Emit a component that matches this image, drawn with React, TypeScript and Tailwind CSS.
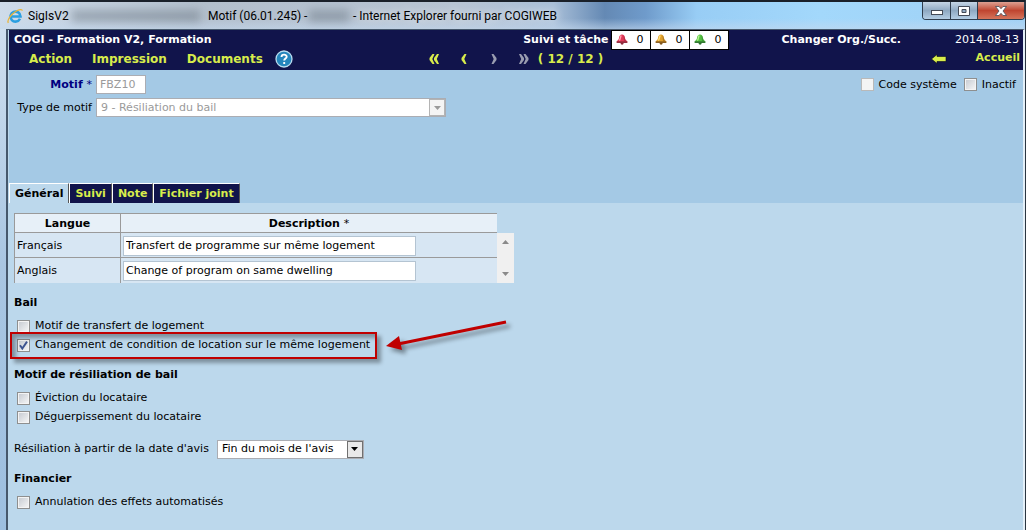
import { useState, type ReactNode } from "react";
import { clsx } from "clsx";

const cellCls = "border-t border-l border-[#9a9a9a] bg-[#d7e6f3] pt-px pl-[2px]";
const fieldCls = "h-5 border border-[#b4c4d2] bg-white text-[11px] text-black outline-none";
const captionBtnCls = "flex items-center justify-center border-r border-[#2f3d4d] bg-linear-to-b from-[#c5d5e5] via-[#8fa9c2] to-[#b3cde4]";

function Check({ label, defaultChecked, disabled, children }: { label: string; defaultChecked?: boolean; disabled?: boolean; children?: ReactNode }) {
  const [on, setOn] = useState(!!defaultChecked);
  return (
    <label className="relative flex h-[19px] w-fit items-center gap-[5px]">
      <span className="relative flex size-[13px]">
        <input
          type="checkbox"
          checked={on}
          disabled={disabled}
          onChange={(e) => setOn(e.target.checked)}
          className={clsx(
            "size-[13px] appearance-none border",
            disabled
              ? "border-[#b9b9b9] bg-[#f4f4f4]"
              : "border-[#8e8f8f] bg-linear-to-br from-[#c4c9d0] to-[#f8f8f8] shadow-[inset_0_0_0_1px_#f4f4f4]",
          )}
        />
        {on && (
          <svg viewBox="0 0 13 13" className="pointer-events-none absolute inset-0 size-[13px]">
            <path d="M3 6.200 5.300 9.600 10 2.600" fill="none" stroke="#3d5490" strokeWidth="1.900" />
          </svg>
        )}
      </span>
      <span>{label}</span>
      {children}
    </label>
  );
}

function Caret({ className }: { className?: string }) {
  return (
    <svg viewBox="0 0 7 4" className={clsx("h-1 w-[7px]", className)} fill="currentColor">
      <path d="M0 0h7L3.500 4z" />
    </svg>
  );
}

function Bell({ light, mid, dark }: { light: string; mid: string; dark: string }) {
  return (
    <svg viewBox="0 0 12 12" className="size-3">
      <path d="M6 .5C4.200.5 3.200 2 3 4 2.800 5.600 2 6.200.7 7.200v1.500h10.600V7.200C10 6.200 9.200 5.600 9 4 8.800 2 7.800.5 6 .5z" fill={mid} />
      <path d="M.7 7.400h10.600v1.500H.7z" fill={dark} />
      <path d="M7.500 1.200C9 2.200 8.300 5 10.500 7.200H8z" fill={dark} fillOpacity=".5" />
      <path d="M4.500 8.800h3.200c0 2.500-3.200 2.500-3.200 0z" fill={dark} />
      <path d="M5.300 1.500C4.200 2.600 4.600 4.600 3.400 6.600" stroke={light} strokeWidth="1.400" fill="none" />
    </svg>
  );
}

const ALERTS = [
  { key: "red", light: "#ff9fb0", mid: "#e23a58", dark: "#8c2a3c" },
  { key: "amber", light: "#ffe07a", mid: "#e0a02c", dark: "#80561c" },
  { key: "green", light: "#b4f58c", mid: "#55c043", dark: "#2c702c" },
];

function TitleBar() {
  return (
    <div className="relative flex h-[29px] items-center overflow-hidden border-t-2 border-[#1a2029] bg-[linear-gradient(to_bottom,transparent_60%,#c4d8ee99),linear-gradient(to_right,#cfdcea,#b3bfcc_20%,#b7c4d3_45%,#a9bfd8_54%,#6489b4_59%,#6f9bcb_63%,#98cdf5_68%,#a3d8fb_80%,#9fd0f5)] pl-[7px] font-[Roboto,'Open_Sans',sans-serif] text-xs text-black">
      <svg viewBox="0 0 16 16" className="size-4 shrink-0">
        <path d="M13 10.800A5 5 0 1 1 13.500 8.500H4.500" fill="none" stroke="#2b9fe0" strokeWidth="2.600" />
        <path d="M1.400 14.800C-.5 12.600 4 6.200 9 3.200c3-1.800 6-2.400 6.200-.4" fill="none" stroke="#e8b53a" strokeWidth="1.300" />
      </svg>
      <span className="ml-[5px] w-10">SigIsV2</span>
      <span className="ml-1 h-3 w-[128px] bg-[#5d6875]/40 blur-xs" />
      <span className="ml-2 w-[101px]">Motif (06.01.245) -</span>
      <span className="mr-1 h-3 w-[40px] bg-[#5d6875]/40 blur-xs" />
      <span className="[text-shadow:0_0_8px_#fff]">- Internet Explorer fourni par COGIWEB</span>
      <div className="absolute top-0 right-0 flex h-[18px] overflow-hidden rounded-b border border-t-0 border-[#2f3d4d]">
        <button aria-label="Réduire" className={clsx(captionBtnCls, "w-7")}>
          <svg viewBox="0 0 12 5" className="mt-1 h-[5px] w-3"><rect x=".5" y=".5" width="11" height="4" fill="#fff" stroke="#444b57" /></svg>
        </button>
        <button aria-label="Agrandir" className={clsx(captionBtnCls, "w-[27px]")}>
          <svg viewBox="0 0 12 10" className="h-[10px] w-3"><path d="M.5.5h11v9H.5zM4 3.500v3h4v-3z" fill="#fff" fillRule="evenodd" stroke="#444b57" /></svg>
        </button>
        <button aria-label="Fermer" className="flex w-[46px] items-center justify-center bg-linear-to-b from-[#dca092] via-[#bf4530] to-[#d5745a]">
          <svg viewBox="0 0 12 10" className="h-[10px] w-3"><path d="M.5.5h3.500L6 2.700 8 .5h3.500L8 5l3.500 4.500H8L6 7.300 4 9.500H.5L4 5z" fill="#fff" stroke="#444b57" strokeWidth=".8" /></svg>
        </button>
      </div>
    </div>
  );
}

function Chevrons({ double, left, label }: { double?: boolean; left?: boolean; label: string }) {
  return (
    <button aria-label={label} className={left ? "text-[#d8ec4b]" : "text-[#9a9db0]"}>
      <svg viewBox="0 0 12 10" className={clsx("h-[10px] w-3", left && "-scale-x-100")} fill="currentColor">
        {double ? (
          <path d="M1 0h2l3 4v2l-3 4H1l2.200-5zM5.500 0h2l3 4v2l-3 4h-2l2.200-5z" />
        ) : (
          <path d="M3.500 0h2l3 4v2l-3 4h-2l2.200-5z" />
        )}
      </svg>
    </button>
  );
}

function Header() {
  return (
    <header className="bg-[#11144b] text-white">
      <div className="flex h-5 items-center pr-1 pl-[5px]">
        <b>COGI - Formation V2, Formation</b>
        <b className="mr-[3px] ml-auto">Suivi et tâche</b>
        <div className="flex gap-px self-stretch bg-black p-px">
          {ALERTS.map((a) => (
            <button key={a.key} className="flex w-[38px] items-center justify-between bg-white px-1 pr-[7px] text-black">
              <Bell light={a.light} mid={a.mid} dark={a.dark} />0
            </button>
          ))}
        </div>
        <a href="#org" className="ml-[52px] font-bold">Changer Org./Succ.</a>
        <span className="ml-[54px]">2014-08-13</span>
      </div>
      <div className="flex h-5 items-center pr-[3px] pb-[3px] pl-5 text-xs font-bold text-[#d8ec4b]">
        <nav className="flex items-center gap-5">
          <button>Action</button>
          <button>Impression</button>
          <button>Documents</button>
        </nav>
        <button aria-label="Aide" className="ml-3 shrink-0">
          <svg viewBox="0 0 18 18" className="size-[18px]">
            <circle cx="9" cy="9" r="8" fill="#2486bd" stroke="#b9dcef" strokeWidth="1.300" />
            <path d="M6.500 7c0-3.200 5.200-3 5.200-.3C11.700 8.500 9.200 8.500 9.200 10.500M9.200 12v2" fill="none" stroke="#fff" strokeWidth="1.900" />
          </svg>
        </button>
        <div className="ml-[135px] flex items-center gap-[18px]">
          <Chevrons double left label="Premier" />
          <Chevrons left label="Précédent" />
          <Chevrons label="Suivant" />
          <Chevrons double label="Dernier" />
        </div>
        <span className="ml-2">( 12 / 12 )</span>
        <button aria-label="Retour" className="ml-auto">
          <svg viewBox="0 0 16 10" className="h-[10px] w-4"><path d="M.5 5 6 .5v2h9v5H6v2z" fill="#d8ec4b" stroke="#05061c" strokeWidth=".6" /></svg>
        </button>
        <a href="#accueil" className="ml-[29px] text-[11px]">Accueil</a>
      </div>
    </header>
  );
}

const TABS = ["Général", "Suivi", "Note", "Fichier joint"];

const ROWS = [
  { lang: "Français", text: "Transfert de programme sur même logement" },
  { lang: "Anglais", text: "Change of program on same dwelling" },
];

function Descriptions() {
  return (
    <div className="flex items-end">
      <table className="w-[483px] border-collapse">
        <thead>
          <tr className="h-[19px]">
            <th className="w-[106px] border-t border-l border-[#9a9a9a] bg-[#e7f0f8] pt-px">Langue</th>
            <th className="border-t border-l border-[#9a9a9a] bg-[#e7f0f8] pt-px">
              Description <span className="font-normal">*</span>
            </th>
          </tr>
        </thead>
        <tbody>
          {ROWS.map((r) => (
            <tr key={r.lang} className="h-[25px]">
              <td className={cellCls}>{r.lang}</td>
              <td className={cellCls}>
                <input aria-label={r.lang} defaultValue={r.text} className={clsx(fieldCls, "block w-[293px] px-[2px]")} />
              </td>
            </tr>
          ))}
        </tbody>
      </table>
      <div className="flex h-[50px] w-[17px] flex-col items-center justify-between bg-[#f0f0f0] py-[7px] text-[#8a8a8a]">
        <Caret className="rotate-180" />
        <Caret />
      </div>
    </div>
  );
}

export default function App() {
  const [tab, setTab] = useState("Général");
  return (
    <div className="flex min-h-screen flex-col border-r border-[#2b3642] bg-linear-to-b from-[#d3e2f0] via-[#a9c6e2] to-[#9dbfe0] font-['DejaVu_Sans',Verdana,sans-serif] text-[11px] leading-[14px] text-black">
      <TitleBar />
      <div className="ml-[6px] flex flex-1 flex-col border-x-2 border-t border-[#46586c] border-r-[#e4f0f9] bg-[#bcd8ec] pl-px">
        <Header />
        <section className="flex h-[133px] flex-col bg-[#a4c9e5]">
          <div className="flex items-start justify-between pt-[5px] pr-[7px]">
            <div className="grid grid-cols-[83px_auto] items-center gap-x-1 gap-y-1">
              <label htmlFor="motif" className="text-right font-bold text-[#000080]">
                Motif <span className="font-normal">*</span>
              </label>
              <input id="motif" disabled defaultValue="FBZ10" className="h-[19px] w-[50px] border border-[#abadb3] bg-white px-[3px] text-[#9a9a9a]" />
              <label htmlFor="type" className="text-right">Type de motif</label>
              <div className="relative w-fit">
                <select id="type" disabled className="block h-[19px] w-[350px] appearance-none border border-[#abadb3] bg-white px-1 text-[#9a9a9a] opacity-100">
                  <option>9 - Résiliation du bail</option>
                </select>
                <span className="pointer-events-none absolute inset-y-px right-px flex w-4 items-center justify-center border border-[#b4b4b4] bg-[#f4f4f4] text-[#9a9a9a]">
                  <Caret />
                </span>
              </div>
            </div>
            <div className="flex gap-[7px]">
              <Check label="Code système" disabled />
              <Check label="Inactif" />
            </div>
          </div>
          <div role="tablist" className="mt-auto flex h-5">
            {TABS.map((t) => (
              <button
                key={t}
                role="tab"
                aria-selected={tab === t}
                onClick={() => setTab(t)}
                className={clsx(
                  "border-t border-r border-l border-t-white border-r-[#555] border-l-white px-[5px] font-bold",
                  tab === t ? "bg-[#bcd8ec]" : "bg-[#11144b] text-[#d8ec4b]",
                )}
              >
                {t}
              </button>
            ))}
          </div>
        </section>
        <main className="px-[5px] pt-[10px] pb-4">
          <Descriptions />
          <h2 className="mt-[13px] mb-[7px] font-bold">Bail</h2>
          <div className="pl-[3px]">
            <Check label="Motif de transfert de logement" />
            <Check label="Changement de condition de location sur le même logement" defaultChecked>
              <span className="pointer-events-none absolute -inset-x-[7px] -inset-y-1 border-2 border-[#c00000] shadow-[4px_4px_4px_#0005,inset_4px_4px_4px_#0005]" />
              <svg viewBox="0 0 130 50" className="pointer-events-none absolute -bottom-3 left-full ml-3 h-[50px] w-[130px] overflow-visible drop-shadow-[4px_4px_2px_#0006]">
                <path d="M16 27 124 5" stroke="#c00000" strokeWidth="3" />
                <path d="M4 29 17 19 20 33z" fill="#c00000" />
              </svg>
            </Check>
          </div>
          <h2 className="mt-[13px] mb-[7px] font-bold">Motif de résiliation de bail</h2>
          <div className="pl-[3px]">
            <Check label="Éviction du locataire" />
            <Check label="Déguerpissement du locataire" />
          </div>
          <div className="mt-[13px] flex items-center gap-2">
            <label htmlFor="avis">Résiliation à partir de la date d'avis</label>
            <div className="relative">
              <select id="avis" className="block h-[19px] w-[147px] appearance-none border border-[#abadb3] bg-white px-1">
                <option>Fin du mois de l'avis</option>
                <option>Date de l'avis</option>
              </select>
              <span className="pointer-events-none absolute inset-y-px right-px flex w-4 items-center justify-center border border-[#707070] bg-[#e9e9e9]">
                <Caret />
              </span>
            </div>
          </div>
          <h2 className="mt-[13px] mb-[7px] font-bold">Financier</h2>
          <div className="pl-[3px]">
            <Check label="Annulation des effets automatisés" />
          </div>
        </main>
      </div>
    </div>
  );
}
